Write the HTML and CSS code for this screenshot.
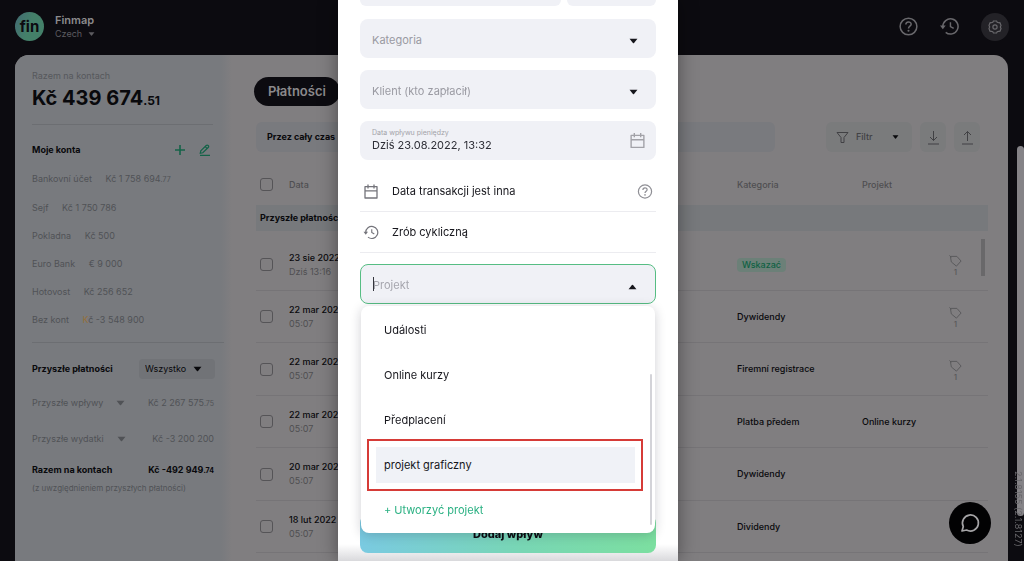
FILE: index.html
```
<!DOCTYPE html>
<html lang="pl">

<head>
    <meta charset="utf-8">
    <title>Finmap</title>
    <meta name="viewport" content="width=device-width, initial-scale=1">
    <link rel="stylesheet" href="styles.css">
</head>

<body>
    <svg class="sprite" width="0" height="0">
        <symbol id="caret" viewBox="0 0 10 6"><path d="M0.6 0.5h8.8L5.6 5.2q-.6.6-1.2 0z" fill="currentColor"/></symbol>
        <symbol id="calendar" viewBox="0 0 16 16"><path d="M2 3.2h12v11.3H2zM2 7.3h12M5 1v4M11 1v4" fill="none" stroke="currentColor" stroke-width="1.3" stroke-linejoin="round"/></symbol>
        <symbol id="question" viewBox="0 0 20 20"><circle cx="10" cy="10" r="8.8" fill="none" stroke="currentColor" stroke-width="1.6"/><path d="M7.2 8c0-3.8 5.6-3.6 5.6-.4 0 2-2.8 2-2.8 4.4" fill="none" stroke="currentColor" stroke-width="1.6"/><circle cx="10" cy="14.5" r="1.1" fill="currentColor"/></symbol>
        <symbol id="history" viewBox="0 0 20 20"><path d="M3 10a8 8 0 1 1 3 6.2" fill="none" stroke="currentColor" stroke-width="1.6"/><path d="M0 9h6l-3 4z" fill="currentColor"/><path d="M11 5.5V10l3.4 2" fill="none" stroke="currentColor" stroke-width="1.5"/></symbol>
        <symbol id="tag" viewBox="0 0 14 14"><path d="M1.5 1.5h7l4.5 5-5 5.5-5.5-4.5z M.5.5l2 2" fill="none" stroke="currentColor" stroke-width="1"/></symbol>
    </svg>

    <header class="topbar">
        <div class="logo">fin</div>
        <div class="company">
            <strong>Finmap</strong>
            <button class="country">Czech <svg class="caret-sm"><use href="#caret"/></svg></button>
        </div>
        <nav class="top-icons">
            <button aria-label="Pomoc"><svg width="19" height="19"><use href="#question"/></svg></button>
            <button aria-label="Historia"><svg width="19" height="19"><use href="#history"/></svg></button>
            <button class="settings" aria-label="Ustawienia">
                <svg width="14" height="14" viewBox="0 0 14 14" fill="none" stroke="currentColor" stroke-width="1.2"><path d="M5.4 1h3.2l.6 1.2 1.6.5 1.2.2L13 5.4 12.3 7l.7 1.6-1 2.5-1.2.2-1.6.5L8.6 13H5.4l-.6-1.2-1.6-.5-1.2-.2-1-2.5L1.7 7 1 5.4l1-2.5 1.2-.2 1.6-.5z"/><circle cx="7" cy="7" r="2.1"/></svg>
            </button>
        </nav>
    </header>

    <div class="panel">
        <aside class="sidebar">
            <div class="total-label">Razem na kontach</div>
            <div class="total">Kč 439 674<small>.51</small></div>
            <div class="accounts-head">
                <h2>Moje konta</h2>
                <button aria-label="Dodaj konto"><svg width="12" height="12" viewBox="0 0 12 12"><path d="M6 1v10M1 6h10" stroke="currentColor" stroke-width="1.6"/></svg></button>
                <button aria-label="Edytuj konta"><svg width="12" height="12" viewBox="0 0 12 12" fill="none" stroke="currentColor" stroke-width="1.2"><path d="M1.3 9.2l.5-2.4 5.4-5.3q1-.9 2 0 1 1 0 2L3.8 8.8zM6.2 2.6l2 2M1 11.4h10"/></svg></button>
            </div>
            <ul class="accounts">
                <li>Bankovní účet <span>Kč 1 758 694<small>.77</small></span></li>
                <li>Sejf <span>Kč 1 750 786</span></li>
                <li>Pokladna <span>Kč 500</span></li>
                <li>Euro Bank <span>€ 9 000</span></li>
                <li>Hotovost <span>Kč 256 652</span></li>
                <li>Bez kont <span class="warn">Kč -3 548 900</span></li>
            </ul>
            <div class="future-head">
                <h2><label for="period">Przyszłe płatności</label></h2>
                <div class="period">
                    <select id="period"><option>Wszystko</option></select>
                    <svg class="caret"><use href="#caret"/></svg>
                </div>
            </div>
            <div class="future-row"><button>Przyszłe wpływy <svg class="caret"><use href="#caret"/></svg></button><span>Kč 2 267 575<small>.75</small></span></div>
            <div class="future-row"><button>Przyszłe wydatki <svg class="caret"><use href="#caret"/></svg></button><span>Kč -3 200 200</span></div>
            <div class="future-sum"><span>Razem na kontach</span><span>Kč -492 949<small>.74</small></span></div>
            <div class="note">(z uwzględnieniem przyszłych płatności)</div>
        </aside>

        <main class="content">
            <h1>Płatności</h1>
            <div class="toolbar">
                <button class="range">Przez cały czas</button>
                <button class="filter">
                    <svg width="13" height="13" viewBox="0 0 13 13" fill="none" stroke="currentColor"><path d="M1 1.5h11L8 6.5v5H5v-5z"/></svg>
                    Filtr
                    <svg class="caret-sm"><use href="#caret"/></svg>
                </button>
                <button class="square" aria-label="Pobierz"><svg width="13" height="15" viewBox="0 0 13 15" fill="none" stroke="currentColor"><path d="M6.5 1v9.5M3 7l3.5 3.5L10 7M1 14h11"/></svg></button>
                <button class="square" aria-label="Wyślij"><svg width="13" height="15" viewBox="0 0 13 15" fill="none" stroke="currentColor"><path d="M6.5 11V1.5M3 5l3.5-3.5L10 5M1 14h11"/></svg></button>
            </div>
            <div class="table-area">
                <table>
                    <colgroup><col class="c-check"><col><col class="c-cat"><col class="c-proj"><col class="c-tag"></colgroup>
                    <thead>
                        <tr><th><input type="checkbox" aria-label="Zaznacz wszystko"></th><th>Data</th><th>Kategoria</th><th>Projekt</th><th></th></tr>
                        <tr class="section"><th colspan="5">Przyszłe płatności</th></tr>
                    </thead>
                    <tbody>
                        <tr><td><input type="checkbox" aria-label="23 sie 2022"></td><td>23 sie 2022<small>Dziś 13:16</small></td><td><button class="assign">Wskazać</button></td><td></td><td><div class="tag"><svg><use href="#tag"/></svg>1</div></td></tr>
                        <tr><td><input type="checkbox" aria-label="22 mar 2022"></td><td>22 mar 2022<small>05:07</small></td><td>Dywidendy</td><td></td><td><div class="tag"><svg><use href="#tag"/></svg>1</div></td></tr>
                        <tr><td><input type="checkbox" aria-label="22 mar 2022"></td><td>22 mar 2022<small>05:07</small></td><td>Firemní registrace</td><td></td><td><div class="tag"><svg><use href="#tag"/></svg>1</div></td></tr>
                        <tr><td><input type="checkbox" aria-label="22 mar 2022"></td><td>22 mar 2022<small>05:07</small></td><td>Platba předem</td><td>Online kurzy</td><td></td></tr>
                        <tr><td><input type="checkbox" aria-label="20 mar 2022"></td><td>20 mar 2022<small>05:07</small></td><td>Dywidendy</td><td></td><td></td></tr>
                        <tr><td><input type="checkbox" aria-label="18 lut 2022"></td><td>18 lut 2022<small>05:07</small></td><td>Dividendy</td><td></td><td></td></tr>
                    </tbody>
                </table>
                <div class="table-thumb"></div>
            </div>
        </main>
    </div>

    <div class="page-thumb"></div>
    <div class="version">2.1.8155 (2.1.8127)</div>
    <button class="chat" aria-label="Czat"><svg width="22" height="22" viewBox="0 0 22 22" fill="none" stroke="currentColor" stroke-width="1.7"><path d="M3 19l1.3-4.4A8 8 0 1 1 7.6 18z" stroke-linejoin="round"/></svg></button>

    <div class="overlay">
        <form class="modal">
            <div class="amount-row"><div></div><div></div></div>
            <div class="field">
                <select aria-label="Kategoria"><option>Kategoria</option></select>
                <svg class="caret"><use href="#caret"/></svg>
            </div>
            <div class="field">
                <select aria-label="Klient (kto zapłacił)"><option>Klient (kto zapłacił)</option></select>
                <svg class="caret"><use href="#caret"/></svg>
            </div>
            <div class="field date">
                <div class="date-text">
                    <label for="date">Data wpływu pieniędzy</label>
                    <input type="text" id="date" value="Dziś 23.08.2022, 13:32">
                </div>
                <svg width="17" height="17"><use href="#calendar"/></svg>
            </div>
            <div class="options">
                <button type="button"><svg width="17" height="17"><use href="#calendar"/></svg>Data transakcji jest inna<svg class="help" width="15" height="15"><use href="#question"/></svg></button>
                <button type="button"><svg width="15" height="15"><use href="#history"/></svg>Zrób cykliczną</button>
            </div>
            <div class="project">
                <div class="field open">
                    <input type="text" placeholder="Projekt" aria-label="Projekt">
                    <svg class="caret up"><use href="#caret"/></svg>
                </div>
                <ul class="dropdown">
                    <li>Události</li>
                    <li>Online kurzy</li>
                    <li>Předplacení</li>
                    <li class="active"><span>projekt graficzny</span></li>
                    <li><button type="button" class="create">+ Utworzyć projekt</button></li>
                </ul>
            </div>
            <button type="submit" class="submit">Dodaj wpływ</button>
        </form>
    </div>
</body>

</html>
```
FILE: styles.css
```
* {
    box-sizing: border-box;
}

body {
    margin: 0;
    height: 100vh;
    overflow: hidden;
    display: flex;
    flex-direction: column;
    background: #0c0b10;
    font-family: Inter, sans-serif;
    font-size: 10px;
    line-height: 14px;
    color: #09090c;
}

button,
input,
select {
    font: inherit;
    color: inherit;
    background: none;
    border: none;
    padding: 0;
    margin: 0;
    outline: none;
}

button {
    cursor: pointer;
}

svg {
    display: block;
    flex: none;
}

ul {
    list-style: none;
    margin: 0;
    padding: 0;
}

h1,
h2 {
    margin: 0;
    font-size: 10px;
    font-weight: 700;
}

small {
    font-size: 8px;
}

.sprite {
    position: absolute;
}

.caret {
    width: 9px;
    height: 6px;
}

.caret-sm {
    width: 7px;
    height: 4px;
}

/* top bar */
.topbar {
    display: flex;
    align-items: center;
    flex: none;
    height: 55px;
    padding: 0 15px 2px 15px;
    color: #8b8a8c;
}

.logo {
    width: 29px;
    height: 29px;
    border-radius: 50%;
    background: linear-gradient(110deg, #426a73, #448069 50%);
    color: #0c0b10;
    font-size: 15px;
    font-weight: 700;
    line-height: 29px;
    text-align: center;
}

.company {
    margin-left: 11px;
}

.company strong {
    display: block;
    font-size: 11px;
    font-weight: 600;
}

.country {
    display: flex;
    align-items: center;
    gap: 6px;
    color: #5d5c60;
    font-size: 9px;
}

.top-icons {
    display: flex;
    align-items: center;
    gap: 22px;
    margin-left: auto;
    color: #69686c;
}

.settings {
    display: grid;
    place-items: center;
    width: 28px;
    height: 28px;
    border-radius: 50%;
    background: #232227;
}

/* main panel */
.panel {
    display: flex;
    flex: 1;
    min-height: 0;
    margin: 0 16px 0 15px;
    border-radius: 14px 14px 0 0;
    background: #807e80;
    overflow: hidden;
}

.sidebar {
    flex: none;
    width: 217px;
    padding: 14px 8px 0 17px;
    background: linear-gradient(90deg, #787a7e 95%, #807e80);
    color: #505256;
    font-size: 9px;
}

.sidebar h2 {
    color: #09090c;
    font-size: 9px;
}

.total-label {
    color: #56585c;
}

.total {
    height: 42px;
    margin-right: 11px;
    border-bottom: 1px solid #6c6e72;
    color: #09090c;
    font-size: 20px;
    font-weight: 700;
    line-height: 31px;
}

.total small {
    font-size: 12px;
}

.accounts-head {
    display: flex;
    align-items: center;
    gap: 13px;
    height: 35px;
    margin: 7px 13px -2px 0;
    color: #146348;
}

.accounts-head h2 {
    flex: 1;
}

.accounts {
    padding-bottom: 8px;
    border-bottom: 1px solid #6c6e72;
    line-height: 28px;
}

.accounts span {
    margin-left: 11px;
}

.accounts small,
.future-row small,
.future-sum small {
    font-size: 7px;
}

.accounts .warn {
    display: inline-block;
}

.accounts .warn::first-letter {
    color: #94703a;
}

.future-head {
    display: flex;
    align-items: center;
    justify-content: space-between;
    margin: 16px 9px 0 0;
}

.period {
    display: flex;
    align-items: center;
    width: 76px;
    height: 20px;
    padding: 0 13px 0 6px;
    border-radius: 4px;
    background: #717377;
    color: #09090c;
}

.period select {
    flex: 1;
    min-width: 0;
    appearance: none;
}

.future-row {
    display: flex;
    align-items: center;
    justify-content: space-between;
    height: 36px;
    margin-right: 10px;
}

.future-head + .future-row {
    margin-top: 6px;
}

.future-row button {
    display: flex;
    align-items: center;
    gap: 13px;
}

.future-sum {
    display: flex;
    justify-content: space-between;
    margin: 6px 10px 3px 0;
    color: #09090c;
    font-weight: 700;
}

.note {
    font-size: 8px;
}

.content {
    flex: 1;
    min-width: 0;
    padding: 22px 20px 0 22px;
}

.content h1 {
    width: 86px;
    height: 29px;
    border-radius: 15px;
    background: #0c0b10;
    color: #8b898b;
    font-size: 13px;
    font-weight: 600;
    line-height: 28px;
    text-align: center;
}

.toolbar {
    display: flex;
    gap: 8px;
    height: 30px;
    margin: 16px 8px 0 2px;
    font-size: 9px;
}

.range {
    flex: 1;
    margin-right: 43px;
    padding-left: 11px;
    border-radius: 6px;
    background: #797a7e;
    font-weight: 700;
    text-align: left;
}

.filter {
    display: flex;
    align-items: center;
    gap: 7px;
    width: 86px;
    padding: 0 13px 0 10px;
    border-radius: 6px;
    background: #7a7b7c;
    color: #414144;
    font-weight: 500;
}

.filter .caret-sm {
    margin-left: auto;
    color: #09090c;
}

.square {
    display: grid;
    place-items: center;
    width: 26px;
    border-radius: 6px;
    background: #7a7b7c;
    color: #414144;
}

.table-area {
    display: flex;
    align-items: flex-start;
    position: relative;
    margin-left: 2px;
}

table {
    width: 100%;
    table-layout: fixed;
    border-collapse: separate;
    border-spacing: 0;
}

.c-check {
    width: 33px;
}

.c-cat {
    width: 125px;
}

.c-proj {
    width: 81px;
}

.c-tag {
    width: 45px;
}

th,
td {
    padding: 0;
    font-size: 9px;
    text-align: left;
}

thead th {
    height: 53px;
    padding-top: 12px;
    color: #4f4e51;
    font-weight: 500;
}

thead .section th {
    height: 26px;
    padding: 0 4px;
    background: #77797c;
    color: #09090c;
    font-weight: 700;
}

td {
    height: 52px;
    border-bottom: 1px solid #767477;
    font-weight: 500;
}

tr:nth-child(odd) td {
    height: 53px;
}

tbody tr:first-child td {
    height: 60px;
    padding-top: 8px;
}

td small {
    display: block;
    color: #4f4e51;
    font-size: 9px;
    font-weight: 400;
}

input[type="checkbox"] {
    display: block;
    appearance: none;
    width: 13px;
    height: 13px;
    margin-left: 4px;
    border: 1px solid #555457;
    border-radius: 3px;
}

.assign {
    padding: 0 5px;
    border-radius: 4px;
    background: #6c8078;
    color: #0f6043;
}

.tag {
    display: flex;
    flex-direction: column;
    align-items: center;
    width: 13px;
    margin-left: 6px;
    padding-top: 2px;
    color: #58575a;
    font-size: 8px;
    line-height: 8px;
}

.tag svg {
    width: 13px;
    height: 13px;
}

.table-thumb {
    position: absolute;
    top: 87px;
    right: 3px;
    width: 4px;
    height: 37px;
    background: #69686a;
}

.page-thumb {
    position: fixed;
    top: 26%;
    right: 0;
    width: 7px;
    height: 66%;
    border-radius: 4px;
    background: #858387;
}

.version {
    position: fixed;
    right: 1px;
    bottom: 14px;
    writing-mode: vertical-rl;
    font-size: 9px;
    line-height: 10px;
    color: #69686c;
}

.chat {
    position: fixed;
    right: 33px;
    bottom: 17px;
    display: grid;
    place-items: center;
    width: 42px;
    height: 42px;
    border-radius: 50%;
    background: #020203;
    color: #a5a4a6;
}

/* income form */
.overlay {
    position: fixed;
    inset: 0 8px 0 0;
    display: flex;
    justify-content: center;
}

.modal {
    display: flex;
    flex-direction: column;
    width: 340px;
    padding: 0 22px;
    background: linear-gradient(#fff 97%, #d9d9dc);
    box-shadow: 0 0 18px rgba(0, 0, 0, 0.4);
    font-size: 11px;
    color: #16161c;
}

.amount-row {
    display: grid;
    grid-template-columns: 201px 1fr;
    gap: 6px;
    height: 6px;
}

.amount-row div {
    border-radius: 0 0 6px 6px;
    background: #f0f1f6;
}

.field {
    display: flex;
    align-items: center;
    height: 39px;
    margin-top: 12px;
    padding: 0 18px 0 12px;
    border-radius: 8px;
    background: #f0f1f6;
}

.amount-row + .field {
    margin-top: 13px;
}

.field select,
.field input {
    flex: 1;
    min-width: 0;
    appearance: none;
}

.field select {
    padding-top: 2px;
    color: #9a9aa2;
}

.field .caret {
    margin-top: 5px;
}

.field.date {
    padding-right: 10px;
    color: #a2a2a8;
}

.date-text {
    display: flex;
    flex: 1;
    flex-direction: column;
}

.date-text label {
    font-size: 7px;
    line-height: 8px;
}

.date-text input {
    flex: none;
    color: #2d2e36;
    line-height: 16px;
}

.options {
    margin-top: 11px;
}

.options button {
    display: flex;
    align-items: center;
    gap: 13px;
    width: 100%;
    height: 41px;
    padding: 0 3px;
    border-bottom: 1px solid #ececf0;
}

.options svg {
    width: 16px;
    color: #74747b;
}

.options .help {
    margin-left: auto;
    color: #8f8f95;
}

.project {
    position: relative;
}

.field.open {
    position: relative;
    height: 40px;
    margin-top: 11px;
    border: 1px solid #56bd83;
}

/* text caret in the focused box */
.field.open::before {
    content: "";
    position: absolute;
    left: 12px;
    width: 1px;
    height: 14px;
    background: #33343c;
}

.field.open input {
    padding-top: 2px;
}

.field.open input::placeholder {
    color: #a6a6ae;
}

.up {
    transform: rotate(180deg);
}

.dropdown {
    position: absolute;
    top: 100%;
    left: 1px;
    right: 1px;
    margin-top: 2px;
    padding: 1px 15px;
    border-radius: 8px;
    background: #fff;
    box-shadow: 0 2px 12px rgba(20, 20, 40, 0.2);
}

.dropdown::after {
    content: "";
    position: absolute;
    right: 3px;
    bottom: 8px;
    width: 2px;
    height: 151px;
    border-radius: 1px;
    background: #d3d3d8;
}

.dropdown li {
    display: flex;
    align-items: center;
    height: 45px;
    padding-left: 8px;
}

.dropdown .active {
    position: relative;
    padding: 0 5px 0 0;
}

.active span {
    flex: 1;
    padding: 11px 8px;
    background: #f0f2f7;
}

/* red frame around the picked project */
.active::before {
    content: "";
    position: absolute;
    inset: -3px -3px -4px -9px;
    border: 2px solid #d63b37;
}

.create {
    color: #2bb183;
}

.submit {
    height: 38px;
    margin-top: 211px;
    border-radius: 8px;
    background: linear-gradient(90deg, #7acae1, #78d6b4 55%, #7cdfa0);
    color: #0b0b10;
    font-weight: 800;
}
```
